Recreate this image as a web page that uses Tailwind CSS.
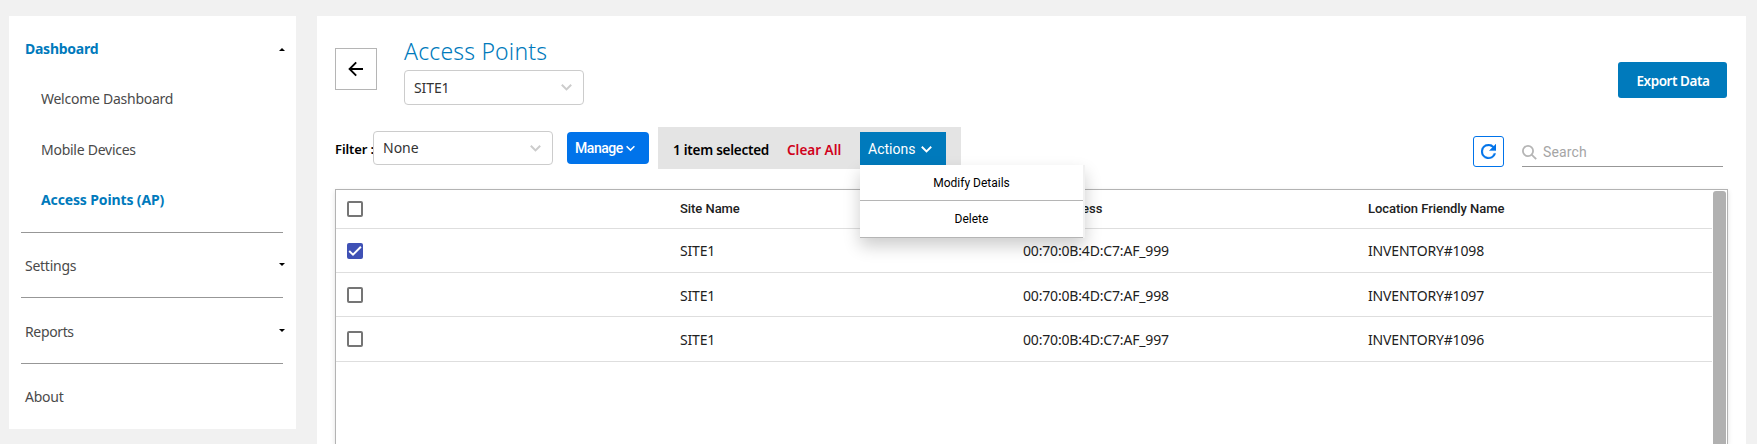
<!DOCTYPE html>
<html lang="en">
<head>
<meta charset="utf-8">
<title>Access Points</title>
<script src="https://cdn.jsdelivr.net/npm/@tailwindcss/browser@4"></script>
</head>
<body class="h-[444px] overflow-hidden bg-[#f1f1f1] font-['Noto_Sans',sans-serif] text-sm text-[#212121]">
<div class="flex h-full items-start gap-[21px] pt-4 pl-[9px]">
  <nav class="flex h-[413px] w-[287px] shrink-0 flex-col bg-white pr-[11px] pl-3 tracking-[-0.26px] text-[#4a4a4a]">
    <div class="flex h-[66px] items-center justify-between pl-1 font-bold text-[#007abc]">
      <span>Dashboard</span>
      <svg class="h-[3px] w-1.5" viewBox="0 0 6 3"><path d="M0 3L3 0L6 3Z" fill="#000"/></svg>
    </div>
    <div class="flex h-[34px] items-center pl-5">Welcome Dashboard</div>
    <div class="mt-[17px] flex h-[34px] items-center pl-5">Mobile Devices</div>
    <div class="mt-4 flex h-[34px] items-center pl-5 font-bold tracking-[-0.13px] text-[#007abc]">Access Points (AP)</div>
    <div class="mt-[15px] mr-0.5 h-px bg-[#979797]"></div>
    <div class="flex h-16 items-center justify-between pt-0.5 pl-1">
      <span>Settings</span>
      <svg class="mb-1 h-[3px] w-1.5" viewBox="0 0 6 3"><path d="M0 0H6L3 3Z" fill="#000"/></svg>
    </div>
    <div class="mr-0.5 h-px bg-[#979797]"></div>
    <div class="flex h-[65px] items-center justify-between pt-0.5 pl-1">
      <span class="tracking-[-0.36px]">Reports</span>
      <svg class="mb-0.5 h-[3px] w-1.5" viewBox="0 0 6 3"><path d="M0 0H6L3 3Z" fill="#000"/></svg>
    </div>
    <div class="mr-0.5 h-px bg-[#979797]"></div>
    <div class="flex h-[65px] items-center pt-px pl-1">About</div>
  </nav>

  <main class="flex h-[428px] w-[1429px] shrink-0 flex-col bg-white pr-[18px] pl-[18px]">
    <header class="flex h-[111px] shrink-0 items-start">
      <button class="mt-8 flex size-[42px] items-center justify-center border border-[#b5b5b5]">
        <svg class="size-4" viewBox="0 0 16 16" fill="none" stroke="#000" stroke-width="1.9"><path d="M15 8H2M8.2 1.4L1.6 8L8.2 14.6"/></svg>
      </button>
      <div class="ml-[27px] pt-[18px]">
        <h1 class="h-9 text-[23px] leading-[34px] font-[360] tracking-[0.18px] text-[#007abc]">Access Points</h1>
        <div class="flex h-[35px] w-[180px] items-center justify-between rounded-[4px] border border-[#ccc] pr-[11px] pl-[9px] tracking-[-0.1px] text-[#333]">
          <span>SITE1</span>
          <svg class="h-[7px] w-[11px]" viewBox="0 0 11 7" fill="none" stroke="#ccc" stroke-width="2"><path d="M.8 .8L5.5 5.4L10.2 .8"/></svg>
        </div>
      </div>
      <button class="mt-[46px] mr-px ml-auto flex h-9 w-[109px] items-center justify-center rounded-[3px] bg-[#007abc] pt-1 pl-px text-[13.5px] font-semibold tracking-[-0.45px] text-white">Export Data</button>
    </header>

    <div class="flex h-[62px] shrink-0 items-start">
      <span class="mt-[13px] w-[38px] text-[13px] font-semibold tracking-[-0.1px] whitespace-nowrap text-black">Filter :</span>
      <div class="mt-1 flex h-[34px] w-[180px] items-center justify-between rounded-[4px] border border-[#ccc] pr-[11px] pl-[9px] text-[#333]">
        <span>None</span>
        <svg class="h-[7px] w-[11px]" viewBox="0 0 11 7" fill="none" stroke="#ccc" stroke-width="2"><path d="M.8 .8L5.5 5.4L10.2 .8"/></svg>
      </div>
      <button class="mt-[5px] ml-3.5 flex h-8 w-[82px] items-center gap-[3px] rounded-[4px] bg-[#0073ea] pl-2 font-[Roboto] text-sm font-medium tracking-[-0.45px] text-white">
        <span>Manage</span>
        <svg class="h-[7px] w-[9px]" viewBox="0 0 9 7" fill="none" stroke="#fff" stroke-width="1.5"><path d="M.6 1.2L4.5 5.1L8.4 1.2"/></svg>
      </button>
      <div class="ml-[9px] flex h-[42px] w-[303px] items-start bg-[#e4e4e4]">
        <span class="mt-[13px] ml-[15px] w-[114px] text-[13.5px] leading-5 font-semibold tracking-[-0.25px] whitespace-nowrap text-black">1 item selected</span>
        <span class="mt-[13px] w-[73px] text-[13.5px] leading-5 font-semibold whitespace-nowrap text-[#d0021b]">Clear All</span>
        <div class="relative mt-[5px]">
          <button class="flex h-[33px] w-[86px] items-center gap-1.5 bg-[#007abc] pt-px pl-2 font-[Roboto] text-sm text-white">
            <span>Actions</span>
            <svg class="h-[7px] w-[11px]" viewBox="0 0 11 7" fill="none" stroke="#fff" stroke-width="1.9"><path d="M.8 .8L5.5 5.4L10.2 .8"/></svg>
          </button>
          <div class="absolute top-[33px] left-0 z-10 w-[225px] bg-[#f1f1f1] pr-0.5 font-[Roboto] text-xs text-black shadow-[0_8px_16px_rgba(0,0,0,0.2)]">
            <div class="flex h-9 items-center justify-center border-b border-[#b5b5b5] bg-white">Modify Details</div>
            <div class="flex h-[37px] items-center justify-center border-b border-[#b5b5b5] bg-white">Delete</div>
          </div>
        </div>
      </div>
      <button class="mt-[9px] ml-auto flex size-[31px] items-center justify-center rounded-[3px] border border-[#0073ea]">
        <svg class="size-[15px]" viewBox="4 4 16 16" fill="#0073ea" stroke="#0073ea" stroke-width=".4"><path d="M17.65 6.35A7.96 7.96 0 0 0 12 4a8 8 0 1 0 7.73 10h-2.08A6 6 0 1 1 12 6c1.66 0 3.14.69 4.22 1.78L13 11h7V4z"/></svg>
      </button>
      <div class="mt-[9px] mr-[5px] ml-[18px] flex h-[31px] w-[201px] items-center gap-1.5 border-b border-[#979797] pt-0.5 font-[Roboto] text-sm text-[#a5a5a5]">
        <svg class="size-[15px]" viewBox="0 0 15 15" fill="none" stroke="#b5b5b5" stroke-width="1.8"><circle cx="6" cy="6" r="5.1"/><path d="M9.6 9.6L14.2 14.2"/></svg>
        <span class="tracking-[0.15px]">Search</span>
      </div>
    </div>

    <section class="flex min-h-0 w-[1393px] flex-1 border border-b-0 border-[#b3b3b3] shadow-[0_2px_5px_rgba(0,0,0,0.12)]">
      <div class="w-[1376px] shrink-0">
        <div class="grid h-[39px] grid-cols-[344px_343px_345px_1fr] items-center border-b border-[#dedede] font-[Roboto] text-[13px] font-medium tracking-[-0.05px]">
          <div class="pl-[11px]"><div class="size-4 rounded-[2px] border-2 border-[#757575]"></div></div>
          <span>Site Name</span><span>MAC Address</span><span>Location Friendly Name</span>
        </div>
        <div class="grid h-11 grid-cols-[344px_343px_345px_1fr] items-center border-b border-[#dedede] tracking-[-0.17px]">
          <div class="pl-[11px]"><svg class="size-4" viewBox="0 0 16 16"><rect width="16" height="16" rx="2" fill="#3f51b5"/><path d="M2.2 8L6 11.6L13.9 3.8" fill="none" stroke="#fff" stroke-width="1.9"/></svg></div>
          <span>SITE1</span><span>00:70:0B:4D:C7:AF_999</span><span>INVENTORY#1098</span>
        </div>
        <div class="grid h-11 grid-cols-[344px_343px_345px_1fr] items-center border-b border-[#dedede] tracking-[-0.17px]">
          <div class="pl-[11px]"><div class="size-4 rounded-[2px] border-2 border-[#757575]"></div></div>
          <span class="pt-0.5">SITE1</span><span class="pt-0.5">00:70:0B:4D:C7:AF_998</span><span class="pt-0.5">INVENTORY#1097</span>
        </div>
        <div class="grid h-[45px] grid-cols-[344px_343px_345px_1fr] items-center border-b border-[#dedede] tracking-[-0.17px]">
          <div class="pl-[11px]"><div class="size-4 rounded-[2px] border-2 border-[#757575]"></div></div>
          <span class="pt-0.5">SITE1</span><span class="pt-0.5">00:70:0B:4D:C7:AF_997</span><span class="pt-0.5">INVENTORY#1096</span>
        </div>
      </div>
      <div class="mt-px ml-px w-[13px] shrink-0 rounded-t-[3px] bg-[#b1b1b1]"></div>
    </section>
  </main>
</div>
</body>
</html>
